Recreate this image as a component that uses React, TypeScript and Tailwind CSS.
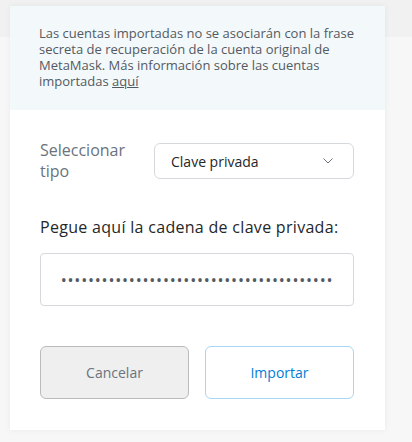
import React from "react";

export default function App() {
  const dots = "•".repeat(40);
  return (
    <div
      className="relative w-[412px] h-[442px] bg-[#f7f7f7] overflow-hidden"
      style={{ fontFamily: '"Open Sans", "Noto Sans", sans-serif' }}
    >
      <div className="absolute left-0 top-0 w-full h-[37px] bg-[#f1f1f2]" />
      <div className="relative ml-[10px] mt-[6px] w-[375px] h-[424px] bg-white shadow-[0_0_6px_rgba(0,0,0,0.06)] flex flex-col">
        <div className="bg-[#f3f8fb] h-[104px] pl-[29px] pr-[24px] pt-[19px] text-[13px] leading-[16px] text-[#535a61]">
          Las cuentas importadas no se asociarán con la frase secreta de recuperación de la cuenta original de MetaMask. Más información sobre las cuentas importadas{" "}
          <span className="underline">aquí</span>
        </div>
        <div className="px-[30px] pt-[30px] flex flex-col">
          <div className="flex items-center">
            <div className="w-[114px] text-[16px] leading-[21px] text-[#6a737d]">Seleccionar tipo</div>
            <div className="w-[200px] h-[36px] border border-[#d6d9dc] rounded-[6px] flex items-center justify-between pl-[16px] pr-[20px]">
              <span className="text-[14px] text-[#24272a]">Clave privada</span>
              <svg width="10" height="6" viewBox="0 0 10 6" fill="none">
                <path d="M0.5 0.5l4.5 4.5L9.5 0.5" stroke="#6a737d" strokeWidth="1" />
              </svg>
            </div>
          </div>
          <div className="mt-[35px] text-[16px] leading-[21px] tracking-[0.3px] text-[#24272a]">Pegue aquí la cadena de clave privada:</div>
          <div className="mt-[15px] w-[314px] h-[53px] border border-[#d6d9dc] rounded-[4px] flex items-center justify-center text-[#535a61] text-[16px] tracking-[0.8px]">
            {dots}
          </div>
          <div className="mt-[40px] flex gap-[16px]">
            <button className="w-[149px] h-[53px] bg-[#efefef] border border-[#bbbbbb] rounded-[6px] text-[14px] text-[#6a737d]">Cancelar</button>
            <button className="w-[149px] h-[53px] bg-white border border-[#a8d7f5] rounded-[6px] text-[14px] text-[#037dd6]">Importar</button>
          </div>
        </div>
      </div>
    </div>
  );
}
